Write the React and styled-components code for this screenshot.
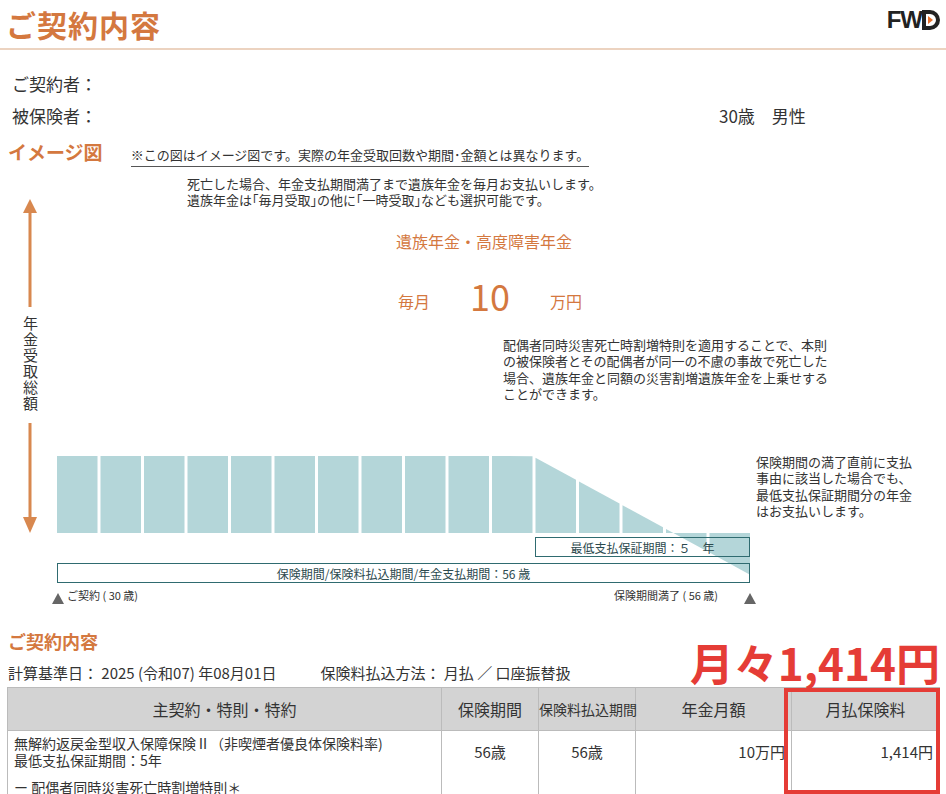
import React from "react";
import styled, { createGlobalStyle } from "styled-components";

const G = createGlobalStyle`
  body{margin:0;background:#fff;font-family:"Noto Sans CJK JP","Noto Sans",sans-serif;color:#333;}
`;
const OR = "#d4783f";
const TEAL = "#b4d6d9";
const LINE = "#2f6b70";

const Page = styled.div`width:946px;height:794px;overflow:hidden;position:relative;`;
const Header = styled.div`display:flex;justify-content:space-between;align-items:flex-start;height:48px;border-bottom:2px solid #ecd3c0;padding:0 6px 0 6px;`;
const Title = styled.h1`margin:0;font-size:30px;line-height:48px;font-weight:700;color:${OR};letter-spacing:1px;`;
const Logo = styled.div`font-family:"Liberation Sans",sans-serif;font-weight:900;font-size:24px;color:#222;margin-top:6px;letter-spacing:-1px;display:flex;align-items:center;`;
const Info = styled.div`padding:18px 0 0 12px;display:flex;flex-direction:column;gap:2px;font-size:17px;`;
const InfoRow = styled.div`display:flex;height:30px;align-items:center;`;
const InfoLabel = styled.span`width:707px;`;
const Section = styled.div`display:flex;align-items:baseline;gap:28px;padding:8px 0 0 8px;`;
const SecTitle = styled.span`color:${OR};font-weight:700;font-size:${p=>p.size||19}px;`;
const Note = styled.span`font-size:13px;border-bottom:1px solid #555;padding-bottom:2px;`;
const Chart = styled.div`position:relative;height:452px;margin-top:9px;`;
const Txt = styled.div`position:absolute;left:${p=>p.x}px;top:${p=>p.y}px;font-size:${p=>p.s||13}px;line-height:${p=>p.lh||1.25};color:${p=>p.c||"#333"};font-weight:${p=>p.w||400};white-space:nowrap;`;
const Box = styled.div`position:absolute;left:${p=>p.x}px;top:${p=>p.y}px;width:${p=>p.wd}px;height:20px;border:1.5px solid ${LINE};font-size:12px;display:flex;align-items:center;justify-content:center;color:#2c4a4e;box-sizing:border-box;`;
const VLabel = styled.div`position:absolute;left:20px;top:136px;writing-mode:vertical-rl;font-size:15px;letter-spacing:1px;padding:4px 0;`;
const Bottom = styled.div`display:flex;justify-content:space-between;align-items:flex-end;padding:0 6px 0 8px;`;
const Left = styled.div`display:flex;flex-direction:column;gap:8px;padding-bottom:4px;`;
const Meta = styled.div`display:flex;gap:44px;font-size:15px;`;
const Big = styled.div`color:#e53c36;font-weight:700;font-size:44px;line-height:50px;`;
const Table = styled.table`border-collapse:collapse;margin-left:7px;width:933px;font-size:15px;table-layout:fixed;`;
const Th = styled.th`background:#d3d3d3;font-weight:400;height:42px;border:1px solid #bbb;font-size:${p=>p.fs||16}px;width:${p=>p.w}px;white-space:nowrap;padding:0;`;
const Td = styled.td`border:1px solid #bbb;vertical-align:top;padding:4px 6px;height:70px;text-align:${p=>p.a||"center"};font-size:${p=>p.fs||15}px;line-height:1.2;`;
const Push = styled.div`margin-top:${p=>p.m||8}px;`;
const RedBox = styled.div`position:absolute;left:784px;top:688px;width:156px;height:106px;border:4px solid #e53c36;box-sizing:border-box;`;

function Bars(){
  const rects=[];
  for(let i=0;i<16;i++){
    const x=57+i*43.5, w=40.5;
    const t=(xx)=>Math.max(461,202+(xx-57)*0.545);
    rects.push(<polygon key={i} points={`${x},${t(x)} ${x+w},${t(x+w)} ${x+w},538 ${x},538`} fill={TEAL}/>);
  }
  return <svg width="946" height="452" style={{position:"absolute",left:0,top:0}} viewBox="0 181 946 452">
    <polygon points="30,204 23,218 37,218" fill="#d8884f"/>
    <rect x="28.5" y="216" width="3" height="96" fill="#d8884f"/>
    <rect x="28.5" y="428" width="3" height="96" fill="#d8884f"/>
    <polygon points="30,538 23,522 37,522" fill="#d8884f"/>
    {rects}
    <polygon points="58,598 52,609 64,609" fill="#666"/>
    <polygon points="750,598 744,609 756,609" fill="#666"/>
  </svg>;
}

export default function App(){
  return <Page><G/>
    <Header><Title>ご契約内容</Title><Logo>FW<svg width="18" height="20" viewBox="0 0 18 20"><path d="M2 2h6a8 8 0 0 1 0 16H2z" fill="none" stroke="#222" strokeWidth="4"/><path d="M6 6l5 4-5 4z" fill="#e8712c"/></svg></Logo></Header>
    <Info><InfoRow><InfoLabel>ご契約者：</InfoLabel></InfoRow><InfoRow><InfoLabel>被保険者：</InfoLabel><span>30歳　男性</span></InfoRow></Info>
    <Section><SecTitle>イメージ図</SecTitle><Note>※この図はイメージ図です。実際の年金受取回数や期間･金額とは異なります。</Note></Section>
    <Chart>
      <Bars/>
      <VLabel>年金受取総額</VLabel>
      <Txt x={187} y={0}>死亡した場合、年金支払期間満了まで遺族年金を毎月お支払いします。<br/>遺族年金は｢毎月受取｣の他に｢一時受取｣なども選択可能です。</Txt>
      <Txt x={396} y={55} s={16} c={OR}>遺族年金・高度障害年金</Txt>
      <Txt x={398} y={115} s={16} c={OR}>毎月</Txt>
      <Txt x={470} y={100} s={36} c={OR} lh={1.1}>10</Txt>
      <Txt x={550} y={115} s={16} c={OR}>万円</Txt>
      <Txt x={503} y={161}>配偶者同時災害死亡時割増特則を適用することで、本則<br/>の被保険者とその配偶者が同一の不慮の事故で死亡した<br/>場合、遺族年金と同額の災害割増遺族年金を上乗せする<br/>ことができます。</Txt>
      <Txt x={756} y={278}>保険期間の満了直前に支払<br/>事由に該当した場合でも、<br/>最低支払保証期間分の年金<br/>はお支払いします。</Txt>
      <Box x={535} y={361} wd={215}>最低支払保証期間：５　年</Box>
      <Box x={57} y={387} wd={693}>保険期間/保険料払込期間/年金支払期間：56 歳</Box>
      <Txt x={67} y={413} s={11}>ご契約 ( 30 歳)</Txt>
      <Txt x={614} y={413} s={11}>保険期間満了 ( 56 歳)</Txt>
    </Chart>
    <Bottom>
      <Left><SecTitle size={18}>ご契約内容</SecTitle><Meta><span>計算基準日：  2025 (令和07) 年08月01日</span><span>保険料払込方法：  月払 ／ 口座振替扱</span></Meta></Left>
      <Big>月々1,414円</Big>
    </Bottom>
    <Table><thead><tr>
      <Th w={433}>主契約・特則・特約</Th><Th w={96}>保険期間</Th><Th w={96} fs={14}>保険料払込期間</Th><Th w={155}>年金月額</Th><Th>月払保険料</Th>
    </tr></thead><tbody><tr>
      <Td a="left" fs={14}>無解約返戻金型収入保障保険Ⅱ（非喫煙者優良体保険料率)<br/>最低支払保証期間：5年<Push m={10}>ー 配偶者同時災害死亡時割増特則＊</Push></Td>
      <Td><Push>56歳</Push></Td><Td><Push>56歳</Push></Td>
      <Td a="right"><Push>10万円</Push></Td><Td a="right"><Push>1,414円</Push></Td>
    </tr></tbody></Table>
    <RedBox/>
  </Page>;
}
